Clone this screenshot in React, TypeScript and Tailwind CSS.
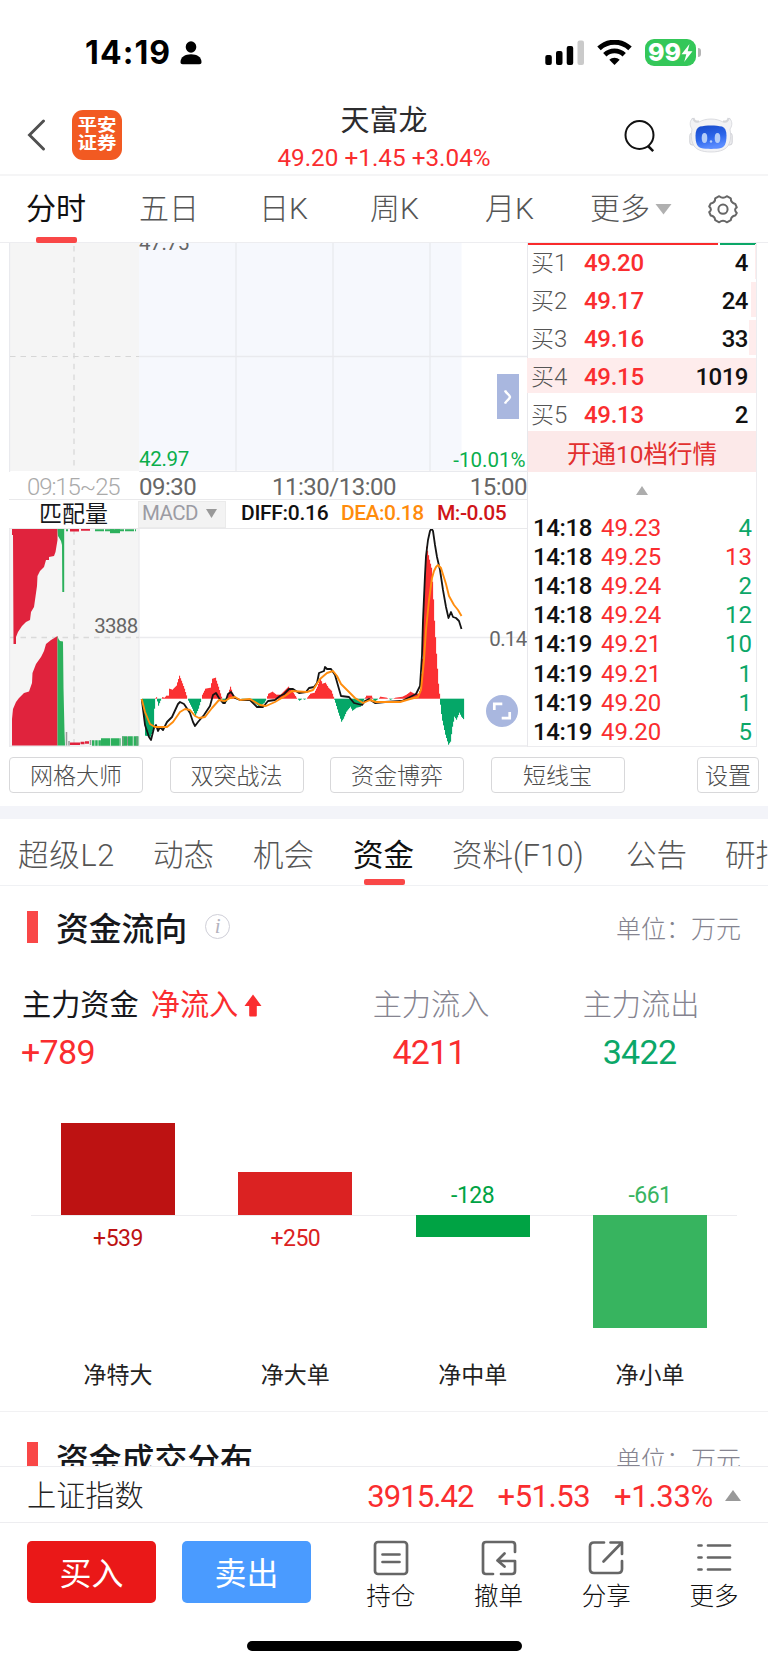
/**
 * Stock detail screen: intraday chart, order book and capital flow
 */

import type { ReactNode } from 'react';

type Point = [number, number];

const ZERO_Y = 698.7;

// [x, signed height] anchors of the MACD histogram
const MACD_ANCHORS: Point[] = [
  [141.7, 0], [143.5, -12], [145, -37], [150, -38], [153, -30], [154.5, 0], [156, 1.5], [158, -7], [160, -2], [162, 1.5],
  [164, 1], [166, 3], [168, 3], [169, 10], [172, 9], [176, 13], [179, 23], [181, 18], [184, 10], [187, 0],
  [189, -4], [192, -10], [195, -17], [198, -10], [201, 0], [202, 4], [205, 10], [210, 11], [212, 20], [215, 21],
  [218, 12], [221, 2], [223, -4], [226, -3], [228, 6], [230, 12], [232, 6], [234, 1], [240, 0], [246, -1],
  [250, -2], [255, -5], [259, -8], [264, -4], [266, 0], [268, 5], [272, 7], [276, 4], [280, 4], [284, 8],
  [288, 12], [293, 6], [296, 1], [299, -2], [302, 0], [304, -1], [306, 0], [310, 5], [314, 6], [317, 12],
  [320, 20], [322, 15], [325, 16], [328, 11], [331, 8], [333, 2], [335, -4], [338, -14], [341, -23], [343, -20],
  [346, -13], [350, -8], [352, -12], [356, -9], [360, -8], [363, -2], [366, 3], [371, 3], [374, -3], [378, 0],
  [380, 2], [386, 1], [390, -1], [395, 1], [402, 2], [406, 4], [410, 7], [414, 5], [418, 5], [420, 10],
  [422, 40], [423, 90], [424.5, 125], [425.5, 154], [427, 148], [429, 139], [431, 131], [432.5, 110], [434, 78], [436, 45],
  [438, 15], [439.5, 0], [440.5, -12], [442, -22], [445, -36], [448, -46], [450, -43], [452, -28], [454, -18], [456, -21],
  [459, -14], [461, -18], [463.5, -21],
];

const MATCH_TOP =
  '12,529 57.5,529 57.5,540 55.5,552 54,556 49,557 49,560 46,560 44,567 40,571 37.5,576 37,586 35,600 34,607 31,612 30,620 26,622 22,626 18,632 16,637 16,644 13.5,644 13,535 12,535';
const MATCH_BOTTOM =
  '12,745.5 12,719 13,709 16,702 19,698 24,693 29,691.5 32,683 32.5,673 36,664 41,657 44,651 46,644 51,640 56,637 57.5,636 57.5,745.5';

const DIFF_LINE =
  '141.7,699 145,725 149,737 151,740 154,728 156,725 158,731 160,727 163,730 167,722 172,717 178,704 180,702 184,704 190,713 193,722 195,726 198,722 204,715 210,706 213,695 216,693 219,698 223,703 225,703 228,694 231,692 235,698 240,700 250,700 257,707 263,707 268,701 275,700 280,696 284,694 289,689 293,689 299,693 306,692 309,688 314,687 317,683 319,673 324,671 325,667 327,669 331,669 335,675 341,696 349,697 354,703 362,705 365,701 369,699 375,703 385,702 402,701 410,697 416,694 420,686 422,655 423,620 425,575 426,556 428,540 430,531 431.5,528.5 433,531 435,545 437,557 440,570 443,590 446,607 448.5,618 451,612 453,617 456,618 459,621 461.5,629';
const DEA_LINE =
  '141.7,699 145,712 150,724 155,727 167,727 173,722 180,712 185,709 190,710 195,716 199,718 205,717 212,708 219,700 225,701 230,698 235,697 240,700 250,699 260,705 266,706 275,702 285,696 292,691 307,692 313,690 320,679 327,673 333,671 337,676 341,684 348,691 355,698 363,703 370,700 376,702 400,702 410,699 418,697 421,690 424,660 426,630 429,600 432,578 434,571 436,567 438,565 441,568 446,584 449,596 454,605 458,610 461.5,616';

function histogram(anchors: Point[]) {
  const bars: Point[] = [];
  for (let i = 0; i < anchors.length - 1; i++) {
    const [x0, h0] = anchors[i];
    const [x1, h1] = anchors[i + 1];
    for (let x = Math.ceil(x0); x < x1; x++) {
      bars.push([x, h0 + ((h1 - h0) * (x - x0)) / (x1 - x0)]);
    }
  }
  return bars;
}

const BIDS = [
  { level: 1, price: '49.20', qty: '4', depth: 1 },
  { level: 2, price: '49.17', qty: '24', depth: 5 },
  { level: 3, price: '49.16', qty: '33', depth: 7 },
  { level: 4, price: '49.15', qty: '1019', depth: 229 },
  { level: 5, price: '49.13', qty: '2', depth: 0 },
];

const TRADES = [
  { time: '14:18', price: '49.23', qty: '4', up: false },
  { time: '14:18', price: '49.25', qty: '13', up: true },
  { time: '14:18', price: '49.24', qty: '2', up: false },
  { time: '14:18', price: '49.24', qty: '12', up: false },
  { time: '14:19', price: '49.21', qty: '10', up: false },
  { time: '14:19', price: '49.21', qty: '1', up: false },
  { time: '14:19', price: '49.20', qty: '1', up: false },
  { time: '14:19', price: '49.20', qty: '5', up: false },
];

const FLOWS = [
  { name: '净特大', value: '+539', height: 92, up: true, bar: 'bg-[#bd1212]', text: 'text-[#bd1212]' },
  { name: '净大单', value: '+250', height: 43, up: true, bar: 'bg-[#db2222]', text: 'text-[#db2222]' },
  { name: '净中单', value: '-128', height: 22, up: false, bar: 'bg-[#00a344]', text: 'text-[#00a344]' },
  { name: '净小单', value: '-661', height: 113, up: false, bar: 'bg-[#37b45f]', text: 'text-[#37b45f]' },
];

export default function App() {
  return (
    <div className="w-[768px] h-[1665px] overflow-hidden bg-white flex flex-col text-[#17181c] whitespace-nowrap font-['Roboto','Noto_Sans_CJK_SC',sans-serif]">
      <StatusBar />
      <Header />
      <PeriodTabs />
      <div className="flex h-[504px] pl-[9px] pr-[11px]">
        <ChartPanel />
        <OrderBook />
      </div>
      <ToolButtons />
      <div className="h-[13px] shrink-0 bg-[#f3f4f9]" />
      <InfoTabs />
      <CapitalFlow />
      <div className="h-[55px] shrink-0 overflow-hidden border-t border-[#f1f1f3]">
        <SectionTitle title="资金成交分布" className="pt-[30px]" />
      </div>
      <IndexBar />
      <BottomBar />
    </div>
  );
}

function StatusBar() {
  return (
    <div className="h-[88px] shrink-0 flex items-center pl-[85px] pr-[67px] pt-[17px] text-black">
      <span className="font-['Inter'] font-bold text-[32px] leading-none tracking-[1.1px]">14:19</span>
      <svg className="ml-[9px]" width="22" height="24" viewBox="0 0 22 24">
        <ellipse cx="11" cy="6" rx="5.3" ry="5.8" />
        <path d="M0.5 21c0-5 4.8-7.7 10.5-7.7s10.500 2.700 10.500 7.700c0 1.600-.8 2.200-2.200 2.200H2.700C1.300 23.200.5 22.600.5 21z" />
      </svg>
      <div className="ml-auto flex items-center">
        <svg width="40" height="26" viewBox="0 0 40 26">
          <rect x="0.300" y="15" width="6.500" height="10" rx="2" />
          <rect x="11" y="11" width="6.500" height="14" rx="2" />
          <rect x="21.700" y="6" width="6.500" height="19" rx="2" />
          <rect x="32.500" y="0.500" width="6.500" height="24.500" rx="2" fill="#cacaca" />
        </svg>
        <svg className="ml-[12px]" width="35" height="26" viewBox="0 0 35 26">
          <path d="M2 8.400a22.500 22.500 0 0 1 31 0" fill="none" stroke="#000" strokeWidth="5" />
          <path d="M7.800 14.800a14 14 0 0 1 19.400 0" fill="none" stroke="#000" strokeWidth="4.800" />
          <path d="M17.500 25l-5.200-5.200c2.700-2.700 7.700-2.700 10.400 0z" />
        </svg>
        <div className="ml-[13px] w-[51px] h-[27px] rounded-[9px] bg-[#34c759] flex items-center justify-center text-white">
          <span className="font-['Inter'] font-extrabold text-[25px] leading-none">99</span>
          <svg width="12" height="18" viewBox="0 0 12 18" fill="#fff">
            <path d="M8.500 0L0.500 10.300h4.800L3.200 18l8.300-10.800H6.700z" />
          </svg>
        </div>
        <div className="ml-[2px] w-[3px] h-[9px] rounded-r-[3px] bg-[#b4b4b4]" />
      </div>
    </div>
  );
}

function Header() {
  return (
    <div className="h-[88px] shrink-0 flex items-center border-b-2 border-[#f5f5f6] pl-[27px] pr-[35px] pt-[8px]">
      <svg width="19" height="32" viewBox="0 0 19 32" fill="none" stroke="#505050" strokeWidth="2.900" strokeLinecap="round">
        <path d="M16.500 2L2.500 16l14 14" />
      </svg>
      <div className="ml-[26px] w-[50px] h-[50px] rounded-[11px] bg-[#f25a22] text-white font-bold text-[19.500px] leading-[20px] flex items-center justify-center">
        <div className="flex flex-col scale-y-90">
          <span>平安</span>
          <span>证券</span>
        </div>
      </div>
      <div className="ml-[155px] w-[214px] flex flex-col items-center pt-[7px]">
        <span className="text-[29px] leading-[37px] text-[#2c2c2e]">天富龙</span>
        <span className="text-[24.300px] leading-[35px] text-[#fa2d2f]">49.20 +1.45 +3.04%</span>
      </div>
      <svg className="ml-[133px] mt-px" width="32" height="34" viewBox="0 0 32 34" fill="none" stroke="#111" strokeWidth="2">
        <circle cx="15.500" cy="16" r="14" />
        <path d="M24 27l5.200 5.200" strokeWidth="2.500" />
      </svg>
      <RobotIcon />
    </div>
  );
}

function RobotIcon() {
  return (
    <svg className="ml-auto" width="44" height="36" viewBox="0 0 44 36">
      <defs>
        <linearGradient id="visor" x1="0" y1="0" x2="0.300" y2="1">
          <stop offset="0" stopColor="#1648c8" />
          <stop offset="0.600" stopColor="#2c66ea" />
          <stop offset="1" stopColor="#5a8cff" />
        </linearGradient>
      </defs>
      <path d="M4 1c1 4 3 4 6 4M40 1c-1 4-3 4-6 4" fill="none" stroke="#d5d6da" strokeWidth="3" />
      <rect x="0.800" y="16" width="6" height="12" rx="2.500" fill="#ececef" stroke="#cfd0d5" />
      <rect x="37.200" y="16" width="6" height="12" rx="2.500" fill="#ececef" stroke="#cfd0d5" />
      <path d="M3 12C0 8 1 3 4 1c0 4 3 5 6 4 7-4 17-4 24 0 3 1 6 0 6-4 3 2 4 7 1 11 1 5 1 11-1 15-2 5-8 8-18 8S6 32 4 27C2 23 2 17 3 12z" fill="#f2f2f4" stroke="#d3d4d9" strokeWidth="0.800" />
      <path d="M11 9.500c6-1.500 16-1.500 22 0 3 1 4.500 4 4.500 9 0 8-2 11.500-5.500 12.500-5 1.200-15 1.200-20 0-3.500-1-5.500-4.500-5.500-12.500 0-5 1.500-8 4.500-9z" fill="url(#visor)" />
      <ellipse cx="15.500" cy="21" rx="2.800" ry="5" fill="#b4cdf8" />
      <ellipse cx="28.500" cy="21" rx="2.800" ry="5" fill="#b4cdf8" />
      <circle cx="22" cy="24.500" r="1.200" fill="#b4cdf8" />
    </svg>
  );
}

function PeriodTabs() {
  return (
    <div className="h-[67px] shrink-0 flex border-b border-[#ededf0] pl-[26px] text-[30px] font-light text-[#555]">
      <PeriodTab label="分时" className="w-[113px]" active />
      <PeriodTab label="五日" className="w-[120px]" />
      <PeriodTab label="日K" className="w-[111px]" />
      <PeriodTab label="周K" className="w-[115px]" />
      <PeriodTab label="月K" className="w-[105px]" />
      <div className="flex w-[117px]">
        <PeriodTab label="更多" className="w-[65px]" />
        <svg width="17" height="11" viewBox="0 0 17 11" className="mt-[28px]">
          <path d="M0.500 0h16l-8 10.500z" fill="#b0b0b0" />
        </svg>
      </div>
      <svg className="mt-[17px]" width="32" height="32" viewBox="0 0 32 32" fill="none" stroke="#666" strokeWidth="2" strokeLinejoin="round">
        <path d="M12.200 3.200Q16 6.200 19.800 3.200L23.800 5.300Q23.600 9.800 28.300 11L29.800 14.300Q26.400 16.500 29.800 20L28.300 22.500Q24.200 23 23.800 27.200L19.800 29.300Q16 26.300 12.200 29.300L8.200 27.200Q7.800 23 3.700 22.500L2.200 19Q5.600 16.500 2.200 13.500L3.700 10.500Q8.400 9.800 8.200 5.300Z" />
        <circle cx="16" cy="16.200" r="4.600" />
      </svg>
    </div>
  );
}

function PeriodTab({ label, active, className }: { label: string; active?: boolean; className: string }) {
  return (
    <div className={`relative flex flex-col shrink-0 ${className}`}>
      <span className={`leading-[66px] ${active ? 'text-[#111] font-normal' : ''}`}>{label}</span>
      {active && <div className="absolute left-[10px] top-[61px] w-[41px] h-[6px] rounded-[2px] bg-[#f94747]" />}
    </div>
  );
}

function ChartPanel() {
  return (
    <div className="w-[519px] shrink-0 flex flex-col border-r border-[#e8e8ec]">
      <PriceChart />
      <div className="h-[28px] shrink-0 flex items-center pt-[2px] text-[24px] leading-none text-[#666] border-b border-[#e9e9eb]">
        <span className="pl-[18px] w-[130px] font-light text-[#aaa] tracking-[-1.1px]">09:15~25</span>
        <span className="w-[133px] tracking-[-0.500px]">09:30</span>
        <span className="tracking-[-0.500px]">11:30/13:00</span>
        <span className="ml-auto tracking-[-0.500px]">15:00</span>
      </div>
      <div className="h-[29px] shrink-0 flex items-center text-[21px] leading-none border-b border-[#e9e9eb]">
        <span className="w-[129px] pt-px text-center text-[23px]">匹配量</span>
        <div className="w-[88px] h-[27px] pl-[3px] bg-[#f3f3f3] border border-[#ebebeb] flex items-center text-[20.500px] text-[#9b9ba3]">
          <span className="-mt-px tracking-[-0.6px]">MACD</span>
          <svg className="ml-[8px] -mt-px" width="11" height="9" viewBox="0 0 11 9">
            <path d="M0 0h11L5.500 9z" fill="#999" />
          </svg>
        </div>
        <span className="ml-[15px] w-[100px] -mt-[2px] font-medium tracking-[-0.300px] text-[#111]">DIFF:0.16</span>
        <span className="w-[96px] -mt-[2px] font-medium tracking-[-0.500px] text-[#ff8c0c]">DEA:0.18</span>
        <span className="-mt-[2px] font-medium tracking-[-0.500px] text-[#cf1519]">M:-0.05</span>
      </div>
      <MacdChart />
    </div>
  );
}

function PriceChart() {
  return (
    <div className="relative h-[229px] shrink-0">
      <svg className="block" width="518" height="229" viewBox="9 243 518 229" fontSize="20.500" letterSpacing="-0.300">
        <rect x="9" y="243" width="130" height="228" fill="#f5f5f5" />
        <rect x="139" y="243" width="322.500" height="227" fill="#f6f8fd" />
        <path d="M9.500 243v229M139 471.500h388M139 356.500h388M236 243v228M333 243v228M430 243v228" fill="none" stroke="#e9eaee" strokeWidth="1.300" />
        <path d="M74 246v225" stroke="#dcdcdc" strokeWidth="1.500" strokeDasharray="5.500 5.200" />
        <path d="M10 356.500h129" stroke="#d6d6d6" strokeWidth="1.200" strokeDasharray="5.500 5" />
        <text x="139" y="250" fill="#666">47.75</text>
        <text x="139" y="465.500" fill="#0aae4c">42.97</text>
        <text x="525.500" y="467" fill="#0aae4c" textAnchor="end" letterSpacing="0">-10.01%</text>
      </svg>
      <button className="absolute left-[488px] top-[131px] w-[22px] h-[45px] bg-[#a9b7df] flex items-center justify-center">
        <svg width="8" height="16" viewBox="0 0 8 16" fill="none" stroke="#fff" strokeWidth="2.400">
          <path d="M1 1.500c1 3 4.500 4 5 6.500-.5 2.500-4 3.500-5 6.500" />
        </svg>
      </button>
    </div>
  );
}

function MacdChart() {
  return (
    <div className="relative h-[218px] shrink-0">
      <svg className="block" width="518" height="218" viewBox="9 529 518 218" fontSize="20.500" letterSpacing="-0.700">
        <rect x="9" y="529" width="130" height="218" fill="#f5f5f5" />
        <path d="M9.500 529v218M139 529v218M139 637.500h388M9 746h518" stroke="#ebebee" strokeWidth="1.300" />
        <path d="M74 529v217M10 637.500h129" stroke="#dadada" strokeWidth="1.400" strokeDasharray="5.500 5" />

        {/* Call auction matched volume */}
        <polygon points={MATCH_TOP} fill="#e0233d" />
        <polygon points="57.500,529 58,536 61,541 62,545 62.300,592 64.200,592 64.200,529" fill="#2cb05c" />
        <polygon points={MATCH_BOTTOM} fill="#e0233d" />
        <polygon points="57.500,636 58.500,639 60,641 63,641.500 63.500,688 64.500,732 65,745.500 57.500,745.500" fill="#2cb05c" />
        <path d="M66.500 732v13.500M69 741v4.500M90.500 740v5" stroke="#9a9a9a" strokeWidth="1.500" />
        <path d="M70 530.300h9M81 529.600h9M70 743.700h10M80.500 743h4M85 742.500h4" stroke="#e0233d" strokeWidth="2.500" />
        <path d="M66 530.300h2M95 530.300h9M105 530.300h31" stroke="#2cb05c" strokeWidth="2" strokeDasharray="9 1" />
        <path d="M110 531.200h10" stroke="#2cb05c" strokeWidth="4" />
        <path d="M92 743h9" stroke="#2cb05c" strokeWidth="5.500" strokeDasharray="2.500 0.700" />
        <path d="M101 742h20" stroke="#2cb05c" strokeWidth="7.500" strokeDasharray="9 0.700" />
        <path d="M122 741h16.500" stroke="#2cb05c" strokeWidth="9.500" strokeDasharray="5 0.800" />
        <path d="M123 736.500v9M127.500 736.500v9M137 736.500v9" stroke="#8a9a8e" />

        {/* MACD histogram and lines */}
        {histogram(MACD_ANCHORS).map(([x, h]) => (
          <rect
            key={x}
            x={x}
            y={h > 0 ? ZERO_Y - h : ZERO_Y}
            width="1.100"
            height={Math.abs(h)}
            fill={h > 0 ? '#fb3032' : '#05a768'}
          />
        ))}
        <polyline points={DIFF_LINE} fill="none" stroke="#141414" strokeWidth="1.800" strokeLinejoin="round" />
        <polyline points={DEA_LINE} fill="none" stroke="#ff8d0e" strokeWidth="1.900" strokeLinejoin="round" />

        <text x="137.500" y="633" fill="#666" textAnchor="end">3388</text>
        <text x="526.500" y="646" fill="#666" textAnchor="end">0.14</text>
      </svg>
      <button className="absolute left-[477px] top-[166px] w-[32px] h-[32px] rounded-full bg-[#a9b7df] flex items-center justify-center">
        <svg width="20" height="20" viewBox="0 0 20 20" fill="none" stroke="#fff" strokeWidth="2.700">
          <path d="M2.300 9V2.800h8M17.700 11v6.200h-8" />
        </svg>
      </button>
    </div>
  );
}

function OrderBook() {
  return (
    <div className="flex-1 min-w-0 flex flex-col border-r border-b border-[#ececef] text-[24px] leading-none">
      <div className="flex gap-[2px] h-[2px] shrink-0">
        <div className="w-[190px] bg-[#f92a2c]" />
        <div className="flex-1 bg-[#0ba768]" />
      </div>
      <div className="flex flex-col gap-[3px] shrink-0 -mt-px">
        {BIDS.map((bid) => (
          <div key={bid.level} className="relative h-[35px] flex items-center pt-[2px] pl-[3px] pr-[8px]">
            <div className="absolute right-0 top-0 h-full bg-[#feecec]" style={{ width: bid.depth }} />
            <span className="relative w-[53px] font-light text-[#555]">
              <span className="text-[23px]">买</span>
              {bid.level}
            </span>
            <span className="relative font-medium tracking-[-0.300px] text-[#fa2d2f]">{bid.price}</span>
            <span className="relative ml-auto font-medium tracking-[-0.500px] text-[#111]">{bid.qty}</span>
          </div>
        ))}
      </div>
      <button className="h-[41px] shrink-0 bg-[#fce9e9] text-[#e2302f] text-[24.500px] leading-[42px] pt-[3px]">开通10档行情</button>
      <svg className="ml-[108px] mt-[14px] mb-px shrink-0" width="12" height="9" viewBox="0 0 12 9">
        <path d="M6 0l6 9H0z" fill="#adadad" />
      </svg>
      <div className="flex flex-col mt-[17px]">
        {TRADES.map((trade, i) => (
          <div key={i} className="h-[29.2px] flex items-center pl-[5px] pr-[4px]">
            <span className="w-[68px] font-medium tracking-[-0.400px] text-[#111]">{trade.time}</span>
            <span className="text-[#fa2d2f]">{trade.price}</span>
            <span className={`ml-auto ${trade.up ? 'text-[#fa2d2f]' : 'text-[#0ba768]'}`}>{trade.qty}</span>
          </div>
        ))}
      </div>
    </div>
  );
}

function ToolButtons() {
  return (
    <div className="h-[59px] shrink-0 pt-[10px] pl-[9px] pr-[9px] flex items-start gap-[26.5px]">
      <ToolButton className="w-[134px]">网格大师</ToolButton>
      <ToolButton className="w-[134px]">双突战法</ToolButton>
      <ToolButton className="w-[134px]">资金博弈</ToolButton>
      <ToolButton className="w-[134px]">短线宝</ToolButton>
      <ToolButton className="w-[62px] ml-auto">设置</ToolButton>
    </div>
  );
}

function ToolButton({ children, className }: { children: ReactNode; className: string }) {
  return (
    <button className={`h-[36px] shrink-0 pt-[3px] border border-[#d8d8da] rounded-[4px] text-[23px] leading-none font-light text-[#4c4c4c] ${className}`}>
      {children}
    </button>
  );
}

function InfoTabs() {
  return (
    <div className="h-[67px] shrink-0 flex border-b border-[#f0f1f4] pl-[18px] text-[30.500px] leading-[73px] font-light text-[#555] overflow-hidden">
      <span className="w-[135px] shrink-0 tracking-[0.7px]">超级L2</span>
      <span className="w-[100px] shrink-0">动态</span>
      <span className="w-[100px] shrink-0">机会</span>
      <div className="relative w-[99px] shrink-0">
        <span className="text-[#111] font-normal">资金</span>
        <div className="absolute left-[11px] top-[60px] w-[41px] h-[6px] rounded-[2px] bg-[#f94747]" />
      </div>
      <span className="w-[174px] shrink-0">资料(F10)</span>
      <span className="w-[99px] shrink-0">公告</span>
      <span className="shrink-0">研报</span>
    </div>
  );
}

function SectionTitle({ title, className, info }: { title: string; className?: string; info?: boolean }) {
  return (
    <div className={`flex items-start pl-[27px] pr-[27px] ${className}`}>
      <div className="w-[11px] h-[32px] bg-[#f94747]" />
      <span className="ml-[18px] mt-px text-[32.800px] leading-[36px] font-medium text-[#17181c]">{title}</span>
      {info && (
        <div className="ml-[18px] mt-[3px] w-[25px] h-[25px] rounded-full border-[1.5px] border-[#cfcfd8] text-[#b3b3be] font-['Liberation_Serif'] italic text-[21px] leading-[22px] text-center">
          i
        </div>
      )}
      <span className="ml-auto mt-[6px] text-[25px] leading-[26px] font-light text-[#858490]">单位：万元</span>
    </div>
  );
}

function CapitalFlow() {
  return (
    <div className="h-[525px] shrink-0 flex flex-col">
      <SectionTitle title="资金流向" className="pt-[25px]" info />
      <div className="flex mt-[39px] text-[29.200px] leading-[36px]">
        <div className="w-[349px] pl-[22px]">
          <div className="flex items-center">
            <span className="text-[#17181c]">主力资金</span>
            <span className="ml-[12px] text-[#fa2d2f]">净流入</span>
            <svg className="ml-[6px]" width="18" height="23" viewBox="0 0 18 23">
              <path d="M9 0.500L17.500 12h-4.700v9.500q0 1-1 1H6.200q-1 0-1-1V12H0.500z" fill="#fa2d2f" />
            </svg>
          </div>
          <div className="mt-[11px] -ml-px text-[34px] leading-[36px] tracking-[-0.700px] font-[450] text-[#fa2d2f]">+789</div>
        </div>
        <div className="w-[164px] flex flex-col items-center">
          <span className="font-light text-[#858490]">主力流入</span>
          <span className="mt-[11px] mr-[4px] text-[34px] leading-[36px] tracking-[-0.900px] font-[450] text-[#fa2d2f]">4211</span>
        </div>
        <div className="ml-[45px] w-[166px] flex flex-col items-center">
          <span className="font-light text-[#858490]">主力流出</span>
          <span className="mt-[11px] mr-[3px] text-[34px] leading-[36px] tracking-[-0.700px] font-[450] text-[#0ba768]">3422</span>
        </div>
      </div>
      <div className="mt-[52px] mx-[31px] flex flex-col">
        <div className="flex px-[30px] justify-between">
          {FLOWS.map((flow) => (
            <div key={flow.name} className={`w-[114px] h-[93px] flex flex-col items-center justify-end text-[23px] ${flow.text}`}>
              {flow.up ? (
                <div className={`w-full ${flow.bar}`} style={{ height: flow.height }} />
              ) : (
                <span className="mb-[6px] leading-[26px] tracking-[-0.500px]">{flow.value}</span>
              )}
            </div>
          ))}
        </div>
        <div className="h-px bg-[#ececef]" />
        <div className="flex px-[30px] -mt-px justify-between">
          {FLOWS.map((flow) => (
            <div key={flow.name} className={`w-[114px] h-[145px] flex flex-col items-center text-[23px] ${flow.text}`}>
              {flow.up ? (
                <span className="mt-[11px] leading-[26px] tracking-[-0.500px]">{flow.value}</span>
              ) : (
                <div className={`w-full ${flow.bar}`} style={{ height: flow.height }} />
              )}
            </div>
          ))}
        </div>
        <div className="flex px-[30px] justify-between">
          {FLOWS.map((flow) => (
            <span key={flow.name} className="w-[114px] text-center text-[23px] leading-[32px] text-[#222]">{flow.name}</span>
          ))}
        </div>
      </div>
    </div>
  );
}

function IndexBar() {
  return (
    <div className="h-[57px] shrink-0 flex items-center pt-[5px] border-y border-[#ededf0] pl-[27px] pr-[27px] text-[31px] font-[450] text-[#fa2d2f]">
      <span className="text-[29.200px] font-light text-[#222]">上证指数</span>
      <span className="ml-auto tracking-[-0.900px]">3915.42</span>
      <span className="ml-[24px] tracking-[-0.500px]">+51.53</span>
      <span className="ml-[24px] tracking-[-0.300px]">+1.33%</span>
      <svg className="ml-[12px] mb-[4px]" width="16" height="11" viewBox="0 0 16 11">
        <path d="M8 0l8 11H0z" fill="#999" />
      </svg>
    </div>
  );
}

function BottomBar() {
  return (
    <div className="flex-1 flex flex-col items-center">
      <div className="w-full flex items-start pt-[17px] pl-[27px]">
        <button className="mt-px w-[129px] h-[62px] pt-[5px] rounded-[5px] bg-[#ea1818] text-white text-[32px] leading-[57px]">买入</button>
        <button className="mt-px ml-[26px] w-[129px] h-[62px] pt-[5px] rounded-[5px] bg-[#4a9bff] text-white text-[32px] leading-[57px]">卖出</button>
        <div className="ml-[26px] flex">
          <ActionItem label="持仓">
            <rect x="2" y="2" width="32" height="32" rx="3" />
            <path d="M9.500 14.500h17M9.500 22h17" />
          </ActionItem>
          <ActionItem label="撤单">
            <path d="M12 34H5q-3 0-3-3V5q0-3 3-3h26q3 0 3 3v7M20 34h11q3 0 3-3V21H17M23.500 13.500L16.500 20.500l7 6" />
          </ActionItem>
          <ActionItem label="分享">
            <path d="M16 2.500H6q-4 0-4 4V29q0 4 4 4h24q4 0 4-4v-8M22.500 2.500H34V14M34 2.500L15.500 21.500" />
          </ActionItem>
          <ActionItem label="更多">
            <path d="M2.500 5.500h3M2.500 17.500h3M2.500 29.500h3M12 5.500h22M12 17.500h22M12 29.500h22" />
          </ActionItem>
        </div>
      </div>
      <div className="mt-auto mb-[14px] w-[275px] h-[10px] rounded-full bg-black" />
    </div>
  );
}

function ActionItem({ label, children }: { label: string; children: ReactNode }) {
  return (
    <button className="w-[107.7px] flex flex-col items-center">
      <svg width="36" height="36" viewBox="0 0 36 36" fill="none" stroke="#666" strokeWidth="2.700" strokeLinecap="round" strokeLinejoin="round">
        {children}
      </svg>
      <span className="mt-[5px] text-[24.500px] leading-[32px] font-light text-[#111]">{label}</span>
    </button>
  );
}
